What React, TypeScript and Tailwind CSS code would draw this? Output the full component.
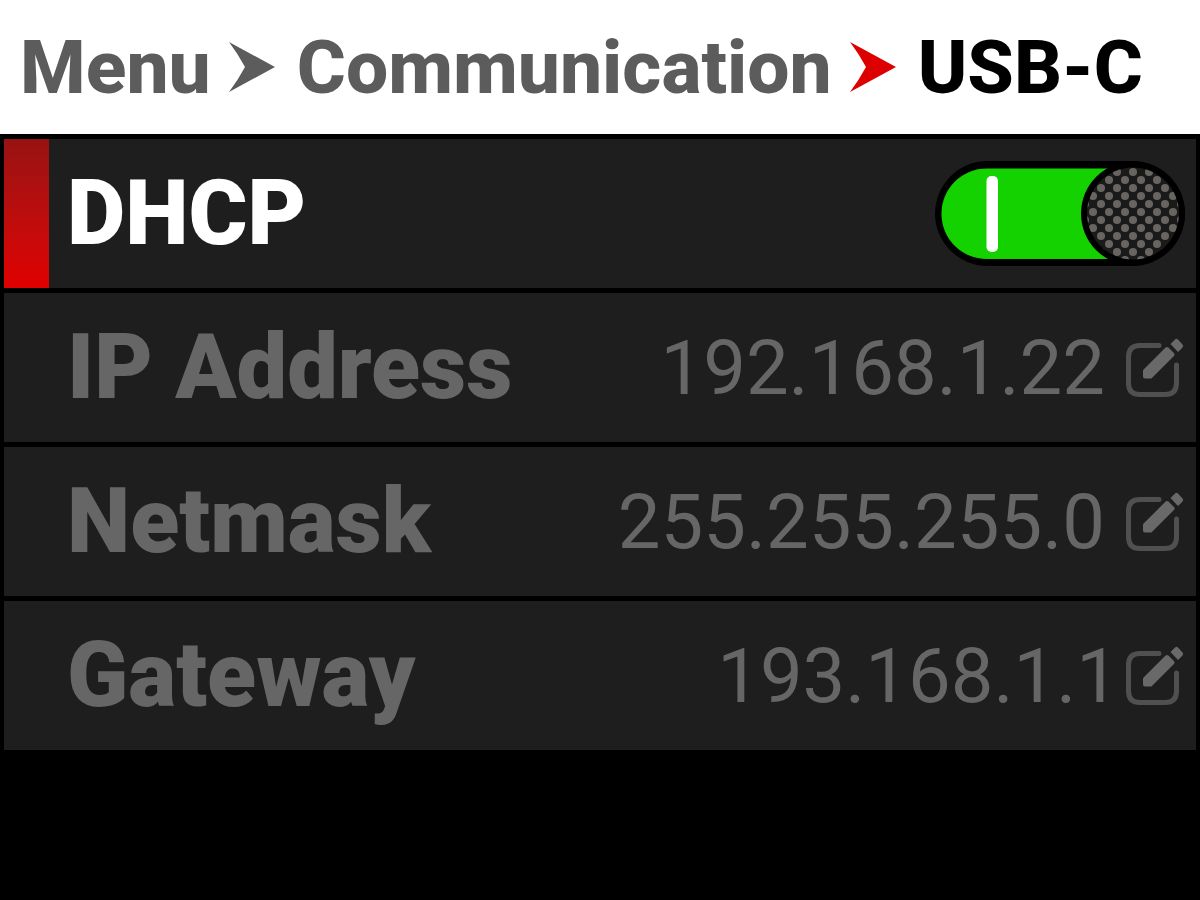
import { useState } from "react";

type Field = { id: string; label: string; value: string; spacing: string };

const fields: Field[] = [
  { id: "ip-address", label: "IP Address", value: "192.168.1.22", spacing: "gap-5" },
  { id: "netmask", label: "Netmask", value: "255.255.255.0", spacing: "gap-5" },
  { id: "gateway", label: "Gateway", value: "193.168.1.1", spacing: "gap-[6px]" },
];

function Arrow({ className }: { className: string }) {
  return (
    <svg aria-hidden="true" viewBox="0 0 46 50" className={`mr-1 h-[50px] w-[46px] shrink-0 fill-current ${className}`}>
      <path d="M0 0 L46 25 L0 50 Q9 38 16 25 Q9 12 0 0 Z" />
    </svg>
  );
}

function EditIcon() {
  return (
    <svg aria-hidden="true" viewBox="0 0 60 60" className="size-[60px]" fill="none">
      <path
        d="M34 7.500H15Q3.500 7.500 3.500 19V45Q3.500 56.500 15 56.500H40Q51.500 56.500 51.500 45V27"
        stroke="#505050"
        strokeWidth="5"
        strokeLinecap="round"
      />
      <path d="M20 38.500V33L42 11L47.500 16.500L25.500 38.500Z" fill="#696969" stroke="#696969" strokeWidth="4" strokeLinejoin="round" />
      <path d="M45.500 6L50 1.500Q51.500 0 53 1.500L57.500 6.500Q59 8 57.500 9.500L53 14Z" fill="#696969" />
    </svg>
  );
}

function Toggle({ id, checked, onChange }: { id: string; checked: boolean; onChange: (v: boolean) => void }) {
  const knob = checked ? 198 : 52;
  return (
    <span className="relative block h-[106px] w-[250px] shrink-0">
      <input
        id={id}
        type="checkbox"
        role="switch"
        checked={checked}
        onChange={(e) => onChange(e.target.checked)}
        className="absolute inset-0 z-10 size-full cursor-pointer opacity-0"
      />
      <svg aria-hidden="true" viewBox="0 0 250 106" className="size-full">
        <defs>
          <pattern id="grip" width="16" height="16" patternUnits="userSpaceOnUse" x="190" y="51">
            <rect width="16" height="16" fill="#1a1a1a" />
            <circle cx="8" cy="8" r="4" fill="#68645f" />
            <circle cx="0" cy="0" r="4" fill="#68645f" />
            <circle cx="16" cy="0" r="4" fill="#68645f" />
            <circle cx="0" cy="16" r="4" fill="#68645f" />
            <circle cx="16" cy="16" r="4" fill="#68645f" />
          </pattern>
        </defs>
        <rect width="250" height="105" rx="52.500" fill="#000" />
        <rect x="6.500" y="7.500" width="237" height="90.500" rx="45" fill={checked ? "#14d200" : "#555"} />
        <rect x="51.500" y="15" width="11.500" height="76" rx="5" fill="#fff" />
        <circle cx={knob} cy="52.500" r="52" fill="#000" />
        <circle cx={knob} cy="52.500" r="46" fill="url(#grip)" />
      </svg>
    </span>
  );
}

export default function App() {
  const [dhcp, setDhcp] = useState(true);

  return (
    <div className="min-h-screen bg-black font-['Roboto',sans-serif]">
      <header className="bg-white">
        <nav aria-label="Breadcrumb" className="flex items-center gap-[18px] px-5 pt-[22px] pb-[22px] text-[75px] leading-[90px] font-extrabold whitespace-nowrap text-[#5c5c5c]">
          <a href="#menu">Menu</a>
          <Arrow className="text-[#5c5c5c]" />
          <a href="#communication">Communication</a>
          <Arrow className="text-[#dc0000]" />
          <a href="#usb-c" aria-current="page" className="text-black">
            USB-C
          </a>
        </nav>
      </header>

      <main className="flex flex-col gap-[5px] px-1 pt-[5px]">
        <div className="flex items-stretch bg-[#1e1e1e]">
          <div className="w-[45px] bg-linear-to-b from-[#981212] to-[#e00000]" />
          <div className="flex flex-1 items-center justify-between pt-[22px] pr-[11px] pb-[21px] pl-[18px]">
            <label htmlFor="dhcp" className="text-[90px] leading-[106px] font-black text-white">
              DHCP
            </label>
            <Toggle id="dhcp" checked={dhcp} onChange={setDhcp} />
          </div>
        </div>

        {fields.map((f) => (
          <div key={f.id} className="flex items-center justify-between bg-[#1e1e1e] pt-[22px] pr-[11px] pb-[21px] pl-[63px] text-[#666666]">
            <label htmlFor={f.id} className="text-[90px] leading-[106px] font-black whitespace-nowrap">
              {f.label}
            </label>
            <div className={`flex items-center ${f.spacing}`}>
              <output id={f.id} className="text-[76px] leading-[90px] whitespace-nowrap">
                {f.value}
              </output>
              <button type="button" disabled={dhcp} aria-label={`Edit ${f.label}`}>
                <EditIcon />
              </button>
            </div>
          </div>
        ))}
      </main>
    </div>
  );
}
